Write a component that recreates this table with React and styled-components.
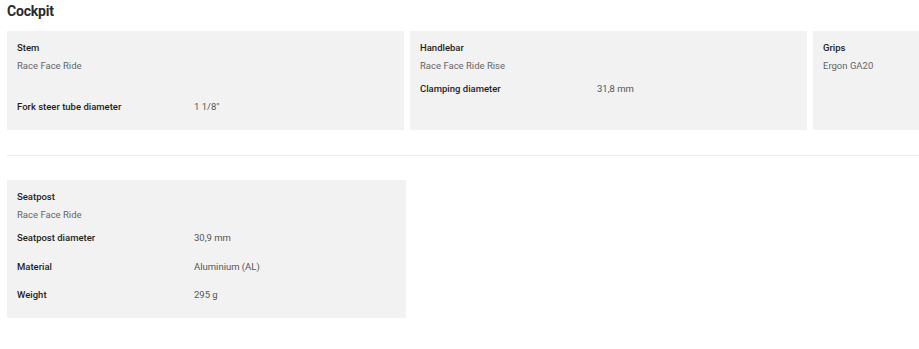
import React from "react";
import styled, { createGlobalStyle } from "styled-components";

const GlobalStyle = createGlobalStyle`
  html, body {
    margin: 0;
    padding: 0;
    background: #ffffff;
    overflow: hidden;
  }
  body {
    font-family: Roboto, "Liberation Sans", sans-serif;
    color: #222;
  }
`;

const Page = styled.div`
  width: 919px;
  padding: 0 0 0 7px;
  box-sizing: border-box;
  overflow: hidden;
`;

const Title = styled.h2`
  margin: 0;
  padding-top: 3px;
  height: 28px;
  font-size: 14px;
  font-weight: 700;
  letter-spacing: -0.2px;
  color: #2a2a2a;
`;

const CardRow = styled.div`
  display: grid;
  grid-template-columns: repeat(3, 397px);
  gap: 6px;
`;

const Card = styled.div`
  background: #f2f2f2;
  padding: 8px 10px 8.5px;
  box-sizing: border-box;
`;

const PartName = styled.div`
  font-size: 9.5px;
  font-weight: 500;
  line-height: 18px;
  color: #1e1e1e;
`;

const Model = styled.div`
  font-size: 9.5px;
  line-height: 18px;
  color: #666;
  margin-bottom: ${(p) => p.$extra || 0}px;
`;

const SpecRow = styled.div`
  display: grid;
  grid-template-columns: 177px 1fr;
  font-size: 9.5px;
  line-height: 18px;
  padding: 5px 0 5.5px;
`;

const SpecLabel = styled.span`
  font-weight: 500;
  color: #1e1e1e;
`;

const SpecValue = styled.span`
  color: #555;
`;

const Divider = styled.hr`
  border: none;
  border-top: 1px solid #ececec;
  margin: 25px 0 24px;
  width: 912px;
`;

const SingleRow = styled.div`
  width: 399px;
`;

const Spec = ({ label, value }) => (
  <SpecRow>
    <SpecLabel>{label}</SpecLabel>
    <SpecValue>{value}</SpecValue>
  </SpecRow>
);

const parts = [
  {
    name: "Stem",
    model: "Race Face Ride",
    extra: 18,
    specs: [["Fork steer tube diameter", "1 1/8\""]],
  },
  {
    name: "Handlebar",
    model: "Race Face Ride Rise",
    specs: [["Clamping diameter", "31,8 mm"]],
  },
  { name: "Grips", model: "Ergon GA20", specs: [] },
];

const seatpost = {
  name: "Seatpost",
  model: "Race Face Ride",
  specs: [
    ["Seatpost diameter", "30,9 mm"],
    ["Material", "Aluminium (AL)"],
    ["Weight", "295 g"],
  ],
};

const PartCard = ({ part }) => (
  <Card>
    <PartName>{part.name}</PartName>
    <Model $extra={part.extra}>{part.model}</Model>
    {part.specs.map(([l, v]) => (
      <Spec key={l} label={l} value={v} />
    ))}
  </Card>
);

export default function App() {
  return (
    <>
      <GlobalStyle />
      <Page>
        <Title>Cockpit</Title>
        <CardRow>
          {parts.map((p) => (
            <PartCard key={p.name} part={p} />
          ))}
        </CardRow>
        <Divider />
        <SingleRow>
          <PartCard part={seatpost} />
        </SingleRow>
      </Page>
    </>
  );
}
